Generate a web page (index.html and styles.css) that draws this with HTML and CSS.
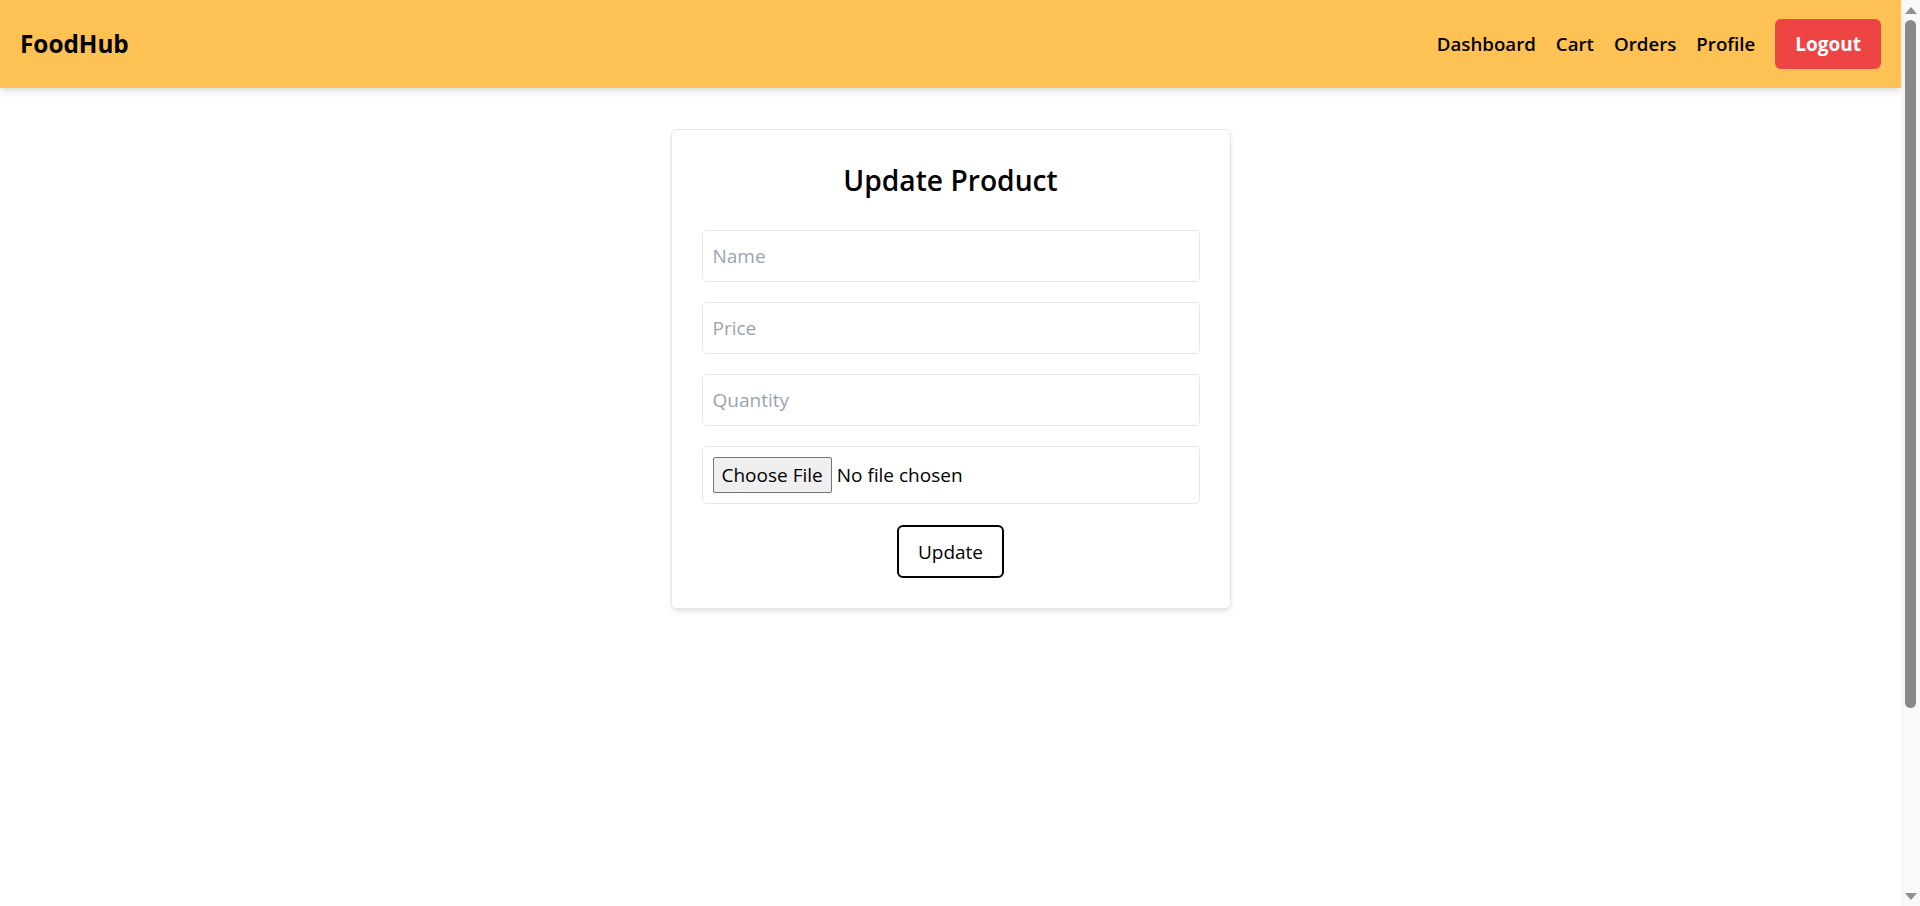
FILE: index.html
```html
<!DOCTYPE html>
<html lang="en">
<head>
<meta charset="utf-8">
<title>FoodHub - Update Product</title>
<link rel="stylesheet" href="styles.css">
</head>
<body>
<div class="page">
  <div class="app">
    <header class="navbar">
      <div class="brand">FoodHub</div>
      <nav class="nav">
        <a class="nav-link" href="#">Dashboard</a>
        <a class="nav-link" href="#">Cart</a>
        <a class="nav-link" href="#">Orders</a>
        <a class="nav-link" href="#">Profile</a>
        <button class="logout" type="button">Logout</button>
      </nav>
    </header>
    <main class="main">
      <div class="card">
        <h2 class="card-title">Update Product</h2>
        <form class="form">
          <input class="field" type="text" placeholder="Name">
          <input class="field" type="text" placeholder="Price">
          <input class="field" type="text" placeholder="Quantity">
          <input class="file-field" type="file">
          <button class="submit" type="button">Update</button>
        </form>
      </div>
    </main>
  </div>
  <div class="scrollbar" aria-hidden="true">
    <div class="arrow-up"></div>
    <div class="thumb"></div>
    <div class="track-rest"></div>
    <div class="arrow-down"></div>
  </div>
</div>
</body>
</html>
```

FILE: styles.css
```css
* {
  box-sizing: border-box;
}

html, body {
  margin: 0;
  padding: 0;
  height: 100%;
  overflow: hidden;
}

body {
  font-family: "Open Sans", "Noto Sans", sans-serif;
  color: #000;
  background: #fff;
}

.page {
  display: flex;
  height: 100vh;
}

.app {
  flex: 1;
  display: flex;
  flex-direction: column;
  min-width: 0;
}

.navbar {
  height: 88px;
  flex-shrink: 0;
  display: flex;
  align-items: center;
  justify-content: space-between;
  padding: 0 20px 0 20px;
  background: #fec154;
  box-shadow: 0 5px 8px -1px rgba(0, 0, 0, 0.1), 0 2px 5px -2px rgba(0, 0, 0, 0.1);
  position: relative;
  z-index: 1;
}

.brand {
  font-size: 24.3px;
  font-weight: 700;
  line-height: 32px;
}

.nav {
  display: flex;
  align-items: center;
  gap: 20px;
}

.nav-link {
  color: #000;
  text-decoration: none;
  font-size: 18.7px;
  font-weight: 600;
  line-height: 28px;
}

.logout {
  height: 50px;
  padding: 0 20px;
  border: none;
  border-radius: 6px;
  background: #ef4444;
  color: #fff;
  font-family: inherit;
  font-size: 19px;
  font-weight: 700;
  cursor: pointer;
}

.main {
  flex: 1;
  padding-top: 41px;
}

.card {
  width: 560px;
  margin: 0 auto;
  padding: 30px;
  border: 1px solid #e5e7eb;
  border-radius: 6px;
  background: #fff;
  box-shadow: 0 3px 6px -1px rgba(0, 0, 0, 0.1), 0 2px 4px -2px rgba(0, 0, 0, 0.08);
}

.card-title {
  margin: 0 0 30px 0;
  text-align: center;
  font-size: 28.2px;
  font-weight: 600;
  line-height: 40px;
}

.form {
  display: flex;
  flex-direction: column;
  gap: 20px;
}

.field {
  width: 100%;
  height: 52px;
  padding: 0 10px;
  border: 1px solid #e5e7eb;
  border-radius: 5px;
  font-family: inherit;
  font-size: 19px;
  color: #000;
  background: #fff;
  outline: none;
}

.field::placeholder {
  color: #9ca3af;
}

.file-field {
  width: 100%;
  height: 58px;
  padding: 10px;
  border: 1px solid #e5e7eb;
  border-radius: 5px;
  font-family: inherit;
  font-size: 19px;
  color: #000;
  background: #fff;
}

.file-field::file-selector-button {
  height: 36px;
  margin-right: 5px;
  padding: 0 8px;
  border: 1px solid #767676;
  border-radius: 2px;
  background: #efefef;
  color: #000;
  font-family: inherit;
  font-size: 19px;
}

.submit {
  align-self: center;
  margin-top: 1px;
  height: 53px;
  padding: 0 19px;
  border: 2px solid #000;
  border-radius: 6px;
  background: #fff;
  color: #000;
  font-family: inherit;
  font-size: 19px;
  cursor: pointer;
}

.scrollbar {
  width: 19px;
  flex-shrink: 0;
  display: flex;
  flex-direction: column;
  align-items: center;
  padding: 7px 0 6px;
  background: #f9f9f9;
}

.arrow-up {
  width: 0;
  height: 0;
  border-left: 6px solid transparent;
  border-right: 6px solid transparent;
  border-bottom: 7px solid #8f8f8f;
}

.thumb {
  width: 11px;
  height: 688px;
  margin-top: 6px;
  border-radius: 6px;
  background: #888;
}

.track-rest {
  flex: 1;
}

.arrow-down {
  width: 0;
  height: 0;
  border-left: 6px solid transparent;
  border-right: 6px solid transparent;
  border-top: 7px solid #8f8f8f;
}
```
